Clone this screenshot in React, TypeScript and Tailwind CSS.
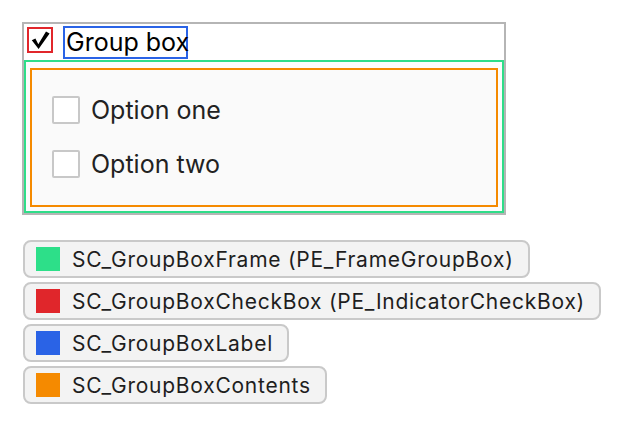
import React from "react";

const font = { fontFamily: "Inter, 'Liberation Sans', sans-serif" };

function Chip({ color, label }: { color: string; label: string }) {
  return (
    <div className="flex">
      <div className="flex items-center h-[38px] border-2 border-[#c9c9c9] bg-[#f3f3f3] rounded-[8px] pl-[11px] pr-[14px]">
        <div className={`w-[24px] h-[24px] ${color}`} />
        <span className="ml-[12px] text-[21px] tracking-[0.75px] text-[#1e1e1e] leading-none whitespace-nowrap">{label}</span>
      </div>
    </div>
  );
}

function Option({ label }: { label: string }) {
  return (
    <div className="flex items-center h-[28px]">
      <div className="w-[28px] h-[28px] border-2 border-[#c8c8c8] bg-white rounded-[2px]" />
      <span className="ml-[11px] text-[25px] text-[#222] leading-none whitespace-nowrap">{label}</span>
    </div>
  );
}

export default function App() {
  return (
    <div className="w-[622px] h-[430px] bg-white" style={font}>
      <div className="pt-[22px] pl-[22px]">
        <div className="w-[484px] h-[193px] border-2 border-[#b5b5b5] flex flex-col">
          <div className="h-[36px] flex items-start">
            <div className="ml-[3px] mt-[3px] w-[26px] h-[26px] border-2 border-[#e1262b] flex items-center justify-center">
              <svg width="22" height="22" viewBox="0 0 22 22">
                <path d="M2.8 11.2 L6.4 9.6 L9.3 15.2 L17 2.6 L20.6 4.6 L9.6 20 Z" fill="#000" />
              </svg>
            </div>
            <div className="ml-[10px] mt-[2px] w-[125px] h-[33px] border-2 border-[#2a63e6] flex items-center pl-[1px]">
              <span className="text-[25px] text-black leading-none whitespace-nowrap">Group box</span>
            </div>
          </div>
          <div className="h-[153px] border-2 border-[#2fdd89] bg-[#fcfcfc] pt-[6px] px-[4px] pb-[4px]">
            <div className="h-full border-2 border-[#f58a00] bg-[#fafafa] pt-[26px] pl-[20px] flex flex-col gap-[26px]">
              <Option label="Option one" />
              <Option label="Option two" />
            </div>
          </div>
        </div>
      </div>
      <div className="mt-[25px] ml-[23px] flex flex-col gap-[4px]">
        <Chip color="bg-[#2ddf89]" label="SC_GroupBoxFrame (PE_FrameGroupBox)" />
        <Chip color="bg-[#e0262b]" label="SC_GroupBoxCheckBox (PE_IndicatorCheckBox)" />
        <Chip color="bg-[#2a63e6]" label="SC_GroupBoxLabel" />
        <Chip color="bg-[#f58a00]" label="SC_GroupBoxContents" />
      </div>
    </div>
  );
}
